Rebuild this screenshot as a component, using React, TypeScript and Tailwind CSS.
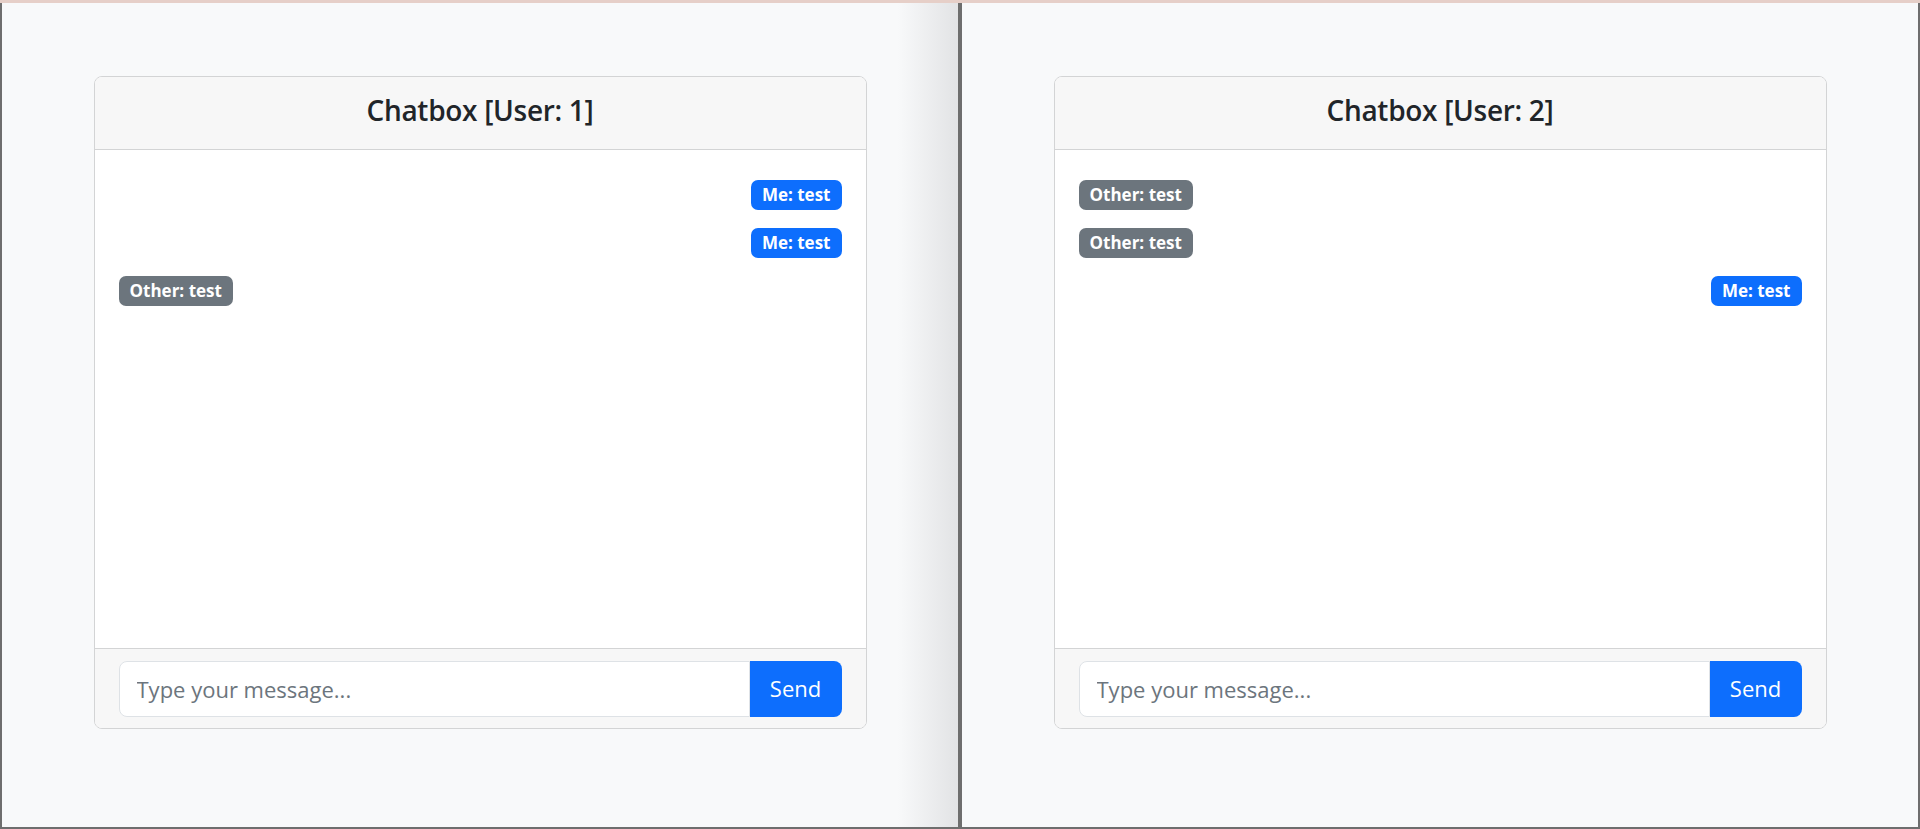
import React from "react";

interface Message {
  from: "me" | "other";
  text: string;
}

const font = { fontFamily: '"Open Sans", "Noto Sans", sans-serif' };

function ChatBox({ user, messages }: { user: number; messages: Message[] }) {
  return (
    <div className="w-[773px] rounded-[8px] border border-[#d3d4d5] bg-white overflow-hidden flex flex-col">
      <div className="h-[73px] flex items-center justify-center bg-[#f7f7f7] border-b border-[#d3d4d5] pb-[6px]">
        <h4 className="text-[28px] font-semibold text-[#212529] leading-none tracking-[-0.3px]">
          Chatbox [User: {user}]
        </h4>
      </div>
      <div className="h-[498px] px-6 pt-[30px] flex flex-col gap-[18px]">
        {messages.map((m, i) => (
          <div key={i} className={m.from === "me" ? "flex justify-end" : "flex justify-start"}>
            <span
              className={`h-[30px] px-[11px] rounded-[7px] flex items-center text-[17px] font-bold text-white ${
                m.from === "me" ? "bg-[#0d6efd]" : "bg-[#6c757d]"
              }`}
            >
              {m.from === "me" ? "Me" : "Other"}: {m.text}
            </span>
          </div>
        ))}
      </div>
      <div className="h-[80px] bg-[#f7f7f7] border-t border-[#d3d4d5] px-6 flex items-center">
        <div className="flex w-full h-[56px]">
          <input
            type="text"
            placeholder="Type your message..."
            style={font}
            className="flex-1 min-w-0 h-full rounded-l-[8px] border border-[#dee2e6] bg-white px-[17px] text-[22px] text-[#212529] placeholder:text-[#6c757d] outline-none"
          />
          <button
            style={font}
            className="w-[92px] h-full rounded-r-[8px] bg-[#0d6efd] text-white text-[22px]"
          >
            Send
          </button>
        </div>
      </div>
    </div>
  );
}

export default function App() {
  const left: Message[] = [
    { from: "me", text: "test" },
    { from: "me", text: "test" },
    { from: "other", text: "test" },
  ];
  const right: Message[] = [
    { from: "other", text: "test" },
    { from: "other", text: "test" },
    { from: "me", text: "test" },
  ];

  return (
    <div className="w-[1920px] h-[829px] flex flex-col bg-[#6e6e6e]" style={font}>
      <div className="h-[3px] bg-[#e6cfc8]" />
      <div className="flex h-[824px]">
        <div className="w-[2px] bg-[#6e6e6e]" />
        <div className="w-[956px] bg-[#f8f9fa] flex items-start justify-center pt-[73px] relative">
          <div className="absolute right-0 top-0 bottom-0 w-[60px] bg-gradient-to-r from-[#f8f9fa]/0 to-[#e2e3e5]" />
          <div className="relative">
            <ChatBox user={1} messages={left} />
          </div>
        </div>
        <div className="w-[4px] bg-[#6e6e6e]" />
        <div className="w-[956px] bg-[#f8f9fa] flex items-start justify-center pt-[73px]">
          <ChatBox user={2} messages={right} />
        </div>
        <div className="w-[2px] bg-[#6e6e6e]" />
      </div>
      <div className="h-[2px] bg-[#6e6e6e]" />
    </div>
  );
}
